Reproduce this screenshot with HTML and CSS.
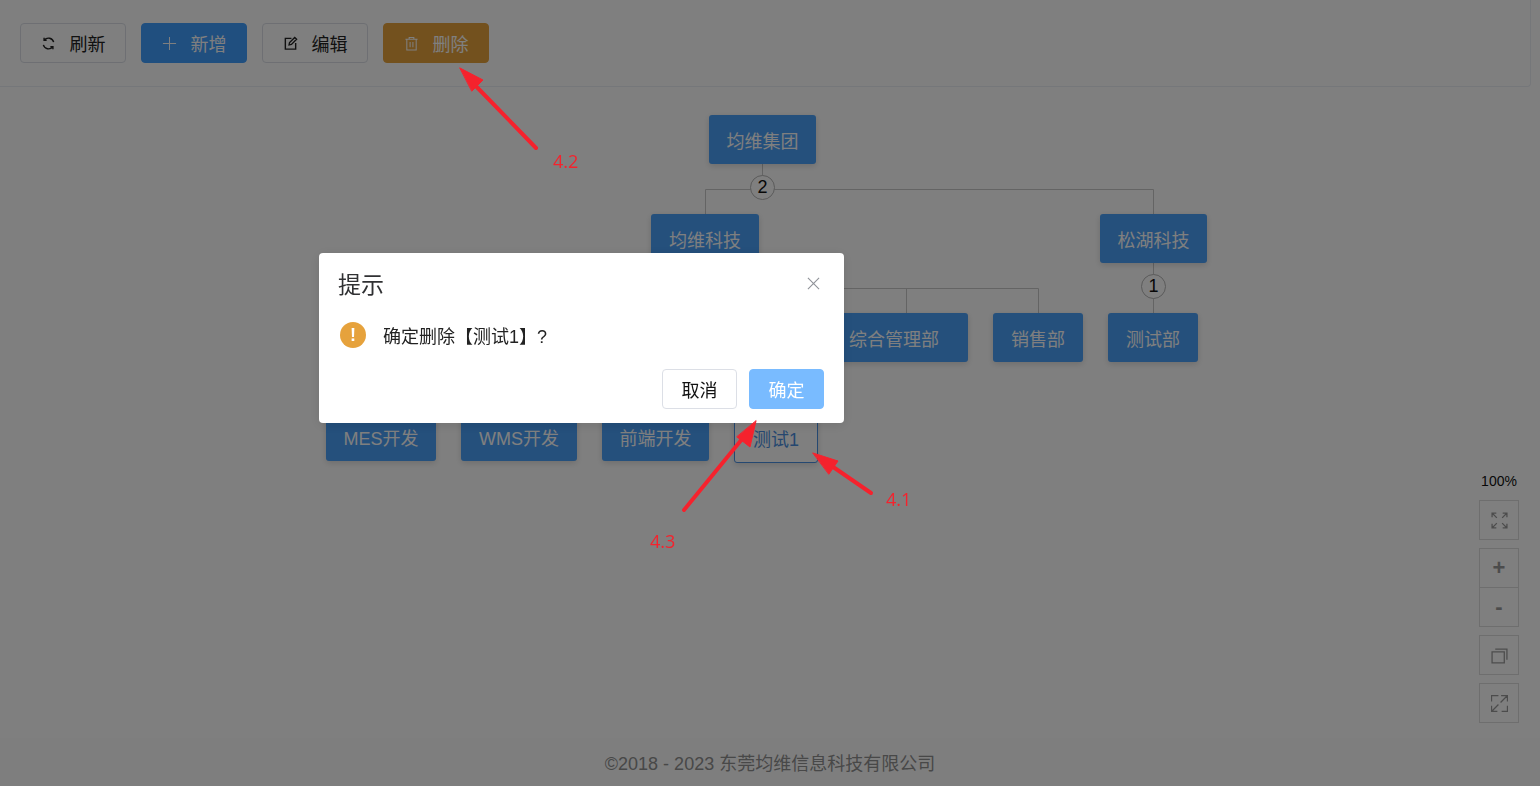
FILE: index.html
```html
<!DOCTYPE html>
<html lang="en">
<head>
  <meta charset="UTF-8" />
  <title>组织架构</title>
  <link rel="stylesheet" href="styles.css">
</head>
<body>
  <div class="page">
    <div class="toolbar">
      <button class="btn">
        <svg class="ico" viewBox="0 0 16 16"><path d="M13.5 6.5A5.8 5.8 0 0 0 3.6 4.2M2.5 9.5a5.8 5.8 0 0 0 9.900 2.300"/><path d="M3.300 1.800v2.700h2.700M12.700 14.200v-2.700H10"/></svg>
        刷新
      </button>
      <button class="btn primary">
        <svg class="ico" viewBox="0 0 16 16"><path d="M8 1v14M1 8h14"/></svg>
        新增
      </button>
      <button class="btn">
        <svg class="ico" viewBox="0 0 16 16"><path d="M9 2.500H2.500v11.500h11V7.500"/><path d="M6.500 9.500l.5-2.500L12.500 1.500l2 2L9 9z"/></svg>
        编辑
      </button>
      <button class="btn warning">
        <svg class="ico" viewBox="0 0 16 16"><path d="M1.500 3.500h13M5.500 3.500V1.500h5v2M3 3.500V15h10V3.500M6.500 6.500V12M9.500 6.500V12"/></svg>
        删除
      </button>
    </div>

    <div class="canvas">
      <svg class="links" width="1540" height="642">
        <path d="M762.500 68V92M705.500 118V93.500H1153.500V118"/>
        <path d="M1153.500 167V217"/>
        <path d="M705.500 167V192.500H1038.500V217M906.500 192.500V217"/>
      </svg>

      <div class="node n-root">均维集团</div>
      <div class="count c-root">2</div>
      <div class="node n-junwei">均维科技</div>
      <div class="node n-songhu">松湖科技</div>
      <div class="count c-songhu">1</div>
      <div class="node n-zonghe">综合管理部</div>
      <div class="node n-sales">销售部</div>
      <div class="node n-test">测试部</div>
      <div class="node n-mes">MES开发</div>
      <div class="node n-wms">WMS开发</div>
      <div class="node n-front">前端开发</div>
      <div class="node n-t1 selected">测试1</div>

      <div class="zoom-tools">
        <span class="zoom-value">100%</span>
        <button class="tool">
          <svg viewBox="0 0 16 16"><path d="M1 5V1h4M1 1l4.500 4.500M11 1h4v4M15 1l-4.500 4.500M1 11v4h4M1 15l4.500-4.500M15 11v4h-4M15 15l-4.500-4.500"/></svg>
        </button>
        <div class="tool-group">
          <button class="tool text-tool">+</button>
          <button class="tool text-tool">-</button>
        </div>
        <button class="tool">
          <svg viewBox="0 0 16 16"><path d="M1 4.500h11.500V15H1zM4 2h11v10"/></svg>
        </button>
        <button class="tool">
          <svg viewBox="0 0 16 16"><path d="M0.500 6V0.500H7M9.500 0.500H15.500V6M0.500 10V15.500H6M15.500 10V15.500H10M15 1L9 7M1 15l6-6"/></svg>
        </button>
      </div>
    </div>

    <div class="footer">©2018 - 2023 东莞均维信息科技有限公司</div>
  </div>

  <div class="mask"></div>

  <div class="dialog">
    <div class="dialog-head">
      <span class="dialog-title">提示</span>
      <svg class="dialog-close" viewBox="0 0 14 14"><path d="M1 1l12 12M13 1L1 13"/></svg>
    </div>
    <div class="dialog-body">
      <span class="warn-ico">!</span>
      <span>确定删除【测试1】?</span>
    </div>
    <div class="dialog-foot">
      <button class="btn small">取消</button>
      <button class="btn small confirm">确定</button>
    </div>
  </div>

  <!-- red notes drawn on top of the screenshot -->
  <svg class="notes" width="1540" height="786">
    <g class="arrow">
      <path d="M536 148L468 78"/>
      <path class="head" d="M460 68L483 80L472 91Z"/>
      <path d="M871 493L823 460"/>
      <path class="head" d="M813 453L838 461L829 474Z"/>
      <path d="M684 510L747 433"/>
      <path class="head" d="M756 421L750 447L737 437Z"/>
    </g>
  </svg>
  <span class="note note-2">4.2</span>
  <span class="note note-1">4.1</span>
  <span class="note note-3">4.3</span>
</body>
</html>
```

FILE: styles.css
```css
* { box-sizing: border-box; }

html, body { height: 100%; margin: 0; overflow: hidden; }

body {
  font-family: "Liberation Sans", "Noto Sans CJK SC", sans-serif;
  font-size: 18px;
  background: #fff;
}

.page { height: 786px; display: flex; flex-direction: column; }

/* Toolbar */
.toolbar {
  height: 87px;
  margin-right: 9px;
  padding: 23px 20px 0;
  display: flex;
  gap: 15px;
  align-items: flex-start;
  border: 1px solid #ebeef5;
  border-width: 0 1px 1px 0;
  border-radius: 0 0 4px 0;
}

.btn {
  height: 40px;
  width: 106px;
  display: inline-flex;
  align-items: center;
  justify-content: center;
  gap: 14px;
  font: inherit;
  color: #222;
  background: #fff;
  border: 1px solid #dcdfe6;
  border-radius: 4px;
  padding: 0;
}
.btn.primary { background: #409eff; border-color: #409eff; color: #fff; }
.btn.warning { background: #e6a23c; border-color: #e6a23c; color: #fff; }
.btn.small { width: 75px; color: #111; }
.btn.confirm { background: #79bbff; border-color: #79bbff; color: #fff; }

.ico { width: 15px; height: 15px; fill: none; stroke: currentColor; stroke-width: 1.500; }
.primary .ico { stroke-width: 1.100; }
.warning .ico { stroke-width: 1.100; }

/* Org chart */
.canvas { position: relative; flex: 1; margin-top: 9px; background: #fff; }

.links { position: absolute; left: 0; top: 0; fill: none; stroke: #c8c8c8; stroke-width: 1; }

.node {
  position: absolute;
  height: 49px;
  display: flex;
  align-items: center;
  justify-content: center;
  color: #fff;
  background: #4aa0f8;
  border-radius: 3px;
  box-shadow: 0 2px 6px rgba(0, 0, 0, .15);
  white-space: nowrap;
}
.node.selected { background: #fff; color: #4a8fe0; border: 1px solid #4a90e2; }

.n-root { left: 709px; top: 19px; width: 107px; }
.n-junwei { left: 651px; top: 118px; width: 108px; }
.n-songhu { left: 1100px; top: 118px; width: 107px; }
.n-zonghe { left: 820px; top: 217px; width: 148px; }
.n-sales { left: 993px; top: 217px; width: 90px; }
.n-test { left: 1108px; top: 217px; width: 90px; }
.n-mes { left: 326px; top: 316px; width: 110px; }
.n-wms { left: 461px; top: 316px; width: 116px; }
.n-front { left: 602px; top: 316px; width: 107px; }
.n-t1 { left: 734px; top: 316px; width: 84px; height: 51px; }

.count {
  position: absolute;
  width: 25px;
  height: 25px;
  display: flex;
  align-items: center;
  justify-content: center;
  color: #111;
  background: #fff;
  border: 1px solid #b5b5b5;
  border-radius: 50%;
}
.c-root { left: 750px; top: 79px; }
.c-songhu { left: 1141px; top: 178px; }

.zoom-tools {
  position: absolute;
  right: 21px;
  top: 377px;
  width: 40px;
  display: flex;
  flex-direction: column;
  align-items: center;
  gap: 8px;
}
.zoom-value { font-size: 14px; color: #111; margin-bottom: 3px; height: 16px; line-height: 16px; white-space: nowrap; }

.tool {
  width: 40px;
  height: 40px;
  padding: 0;
  display: flex;
  align-items: center;
  justify-content: center;
  background: #fff;
  border: 1px solid #dcdcdc;
  color: #888;
  font: inherit;
}
.tool svg { width: 17px; height: 17px; fill: none; stroke: #999; stroke-width: 1.200; }

.tool-group { display: flex; flex-direction: column; }
.tool-group .tool + .tool { margin-top: -1px; }
.text-tool { font-size: 22px; font-weight: bold; color: #999; }

.footer {
  height: 48px;
  display: flex;
  align-items: center;
  justify-content: center;
  color: #909090;
  background: #fdfdfd;
}

/* Message box */
.mask { position: fixed; inset: 0; background: rgba(0, 0, 0, .5); }

.dialog {
  position: fixed;
  left: 319px;
  top: 253px;
  width: 525px;
  height: 170px;
  padding: 15px 20px 14px 19px;
  display: flex;
  flex-direction: column;
  background: #fff;
  border-radius: 4px;
  box-shadow: 0 2px 12px rgba(0, 0, 0, .1);
}
.dialog-head { display: flex; justify-content: space-between; align-items: center; height: 30px; }
.dialog-title { font-size: 23px; color: #303133; }
.dialog-close { width: 13px; height: 13px; margin-right: 4px; fill: none; stroke: #909399; stroke-width: 1.200; }

.dialog-body { display: flex; align-items: center; gap: 17px; margin-top: 22px; padding-left: 2px; color: #222; height: 30px; }
.warn-ico {
  width: 26px;
  height: 26px;
  display: flex;
  align-items: center;
  justify-content: center;
  border-radius: 50%;
  background: #e6a23c;
  color: #fff;
  font-weight: bold;
}

.dialog-foot { display: flex; justify-content: flex-end; gap: 12px; margin-top: auto; }

/* Notes */
.notes { position: fixed; left: 0; top: 0; }
.arrow path { fill: none; stroke: #f5222d; stroke-width: 4; stroke-linecap: round; }
.arrow .head { fill: #f5222d; stroke-width: 1; }

.note { position: fixed; color: #f5222d; font-family: "Open Sans", sans-serif; font-size: 18px; line-height: 22px; }
.note-2 { left: 553px; top: 150px; }
.note-1 { left: 886px; top: 488px; }
.note-3 { left: 650px; top: 530px; }
```
